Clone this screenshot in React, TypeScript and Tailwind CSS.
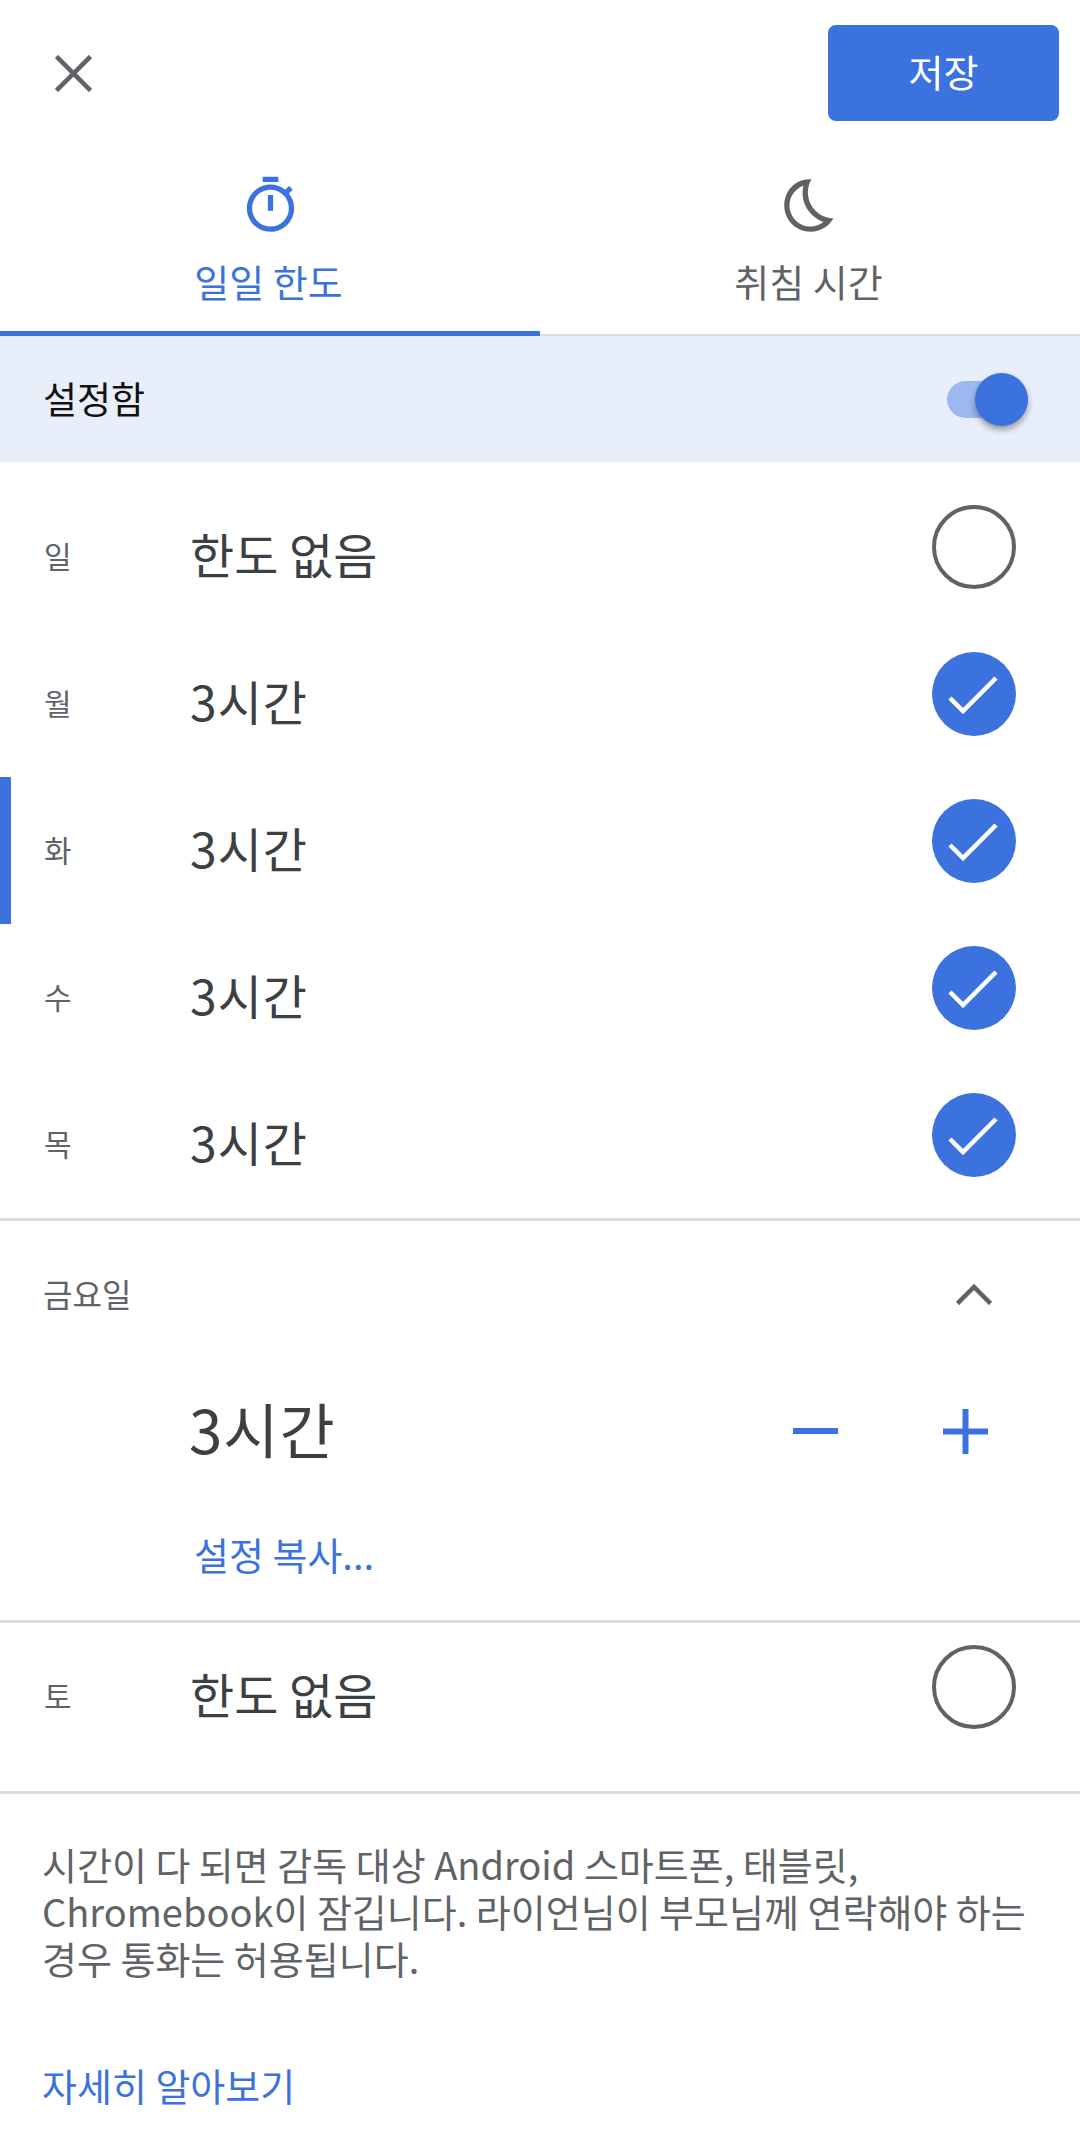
import React from "react";

const font = { fontFamily: '"Noto Sans CJK KR", "Noto Sans", sans-serif' };

const TimerIcon = () => (
  <svg viewBox="0 0 24 24" className="h-[63px] w-[63px] fill-[#3b72de]">
    <path d="M15 1H9v2h6V1zm-4 13h2V8h-2v6zm8.03-6.61l1.42-1.42c-.43-.51-.9-.99-1.41-1.41l-1.42 1.42C16.07 4.74 14.12 4 12 4c-4.97 0-9 4.03-9 9s4.02 9 9 9 9-4.03 9-9c0-2.12-.74-4.07-1.97-5.61zM12 20c-3.87 0-7-3.13-7-7s3.13-7 7-7 7 3.13 7 7-3.13 7-7 7z" />
  </svg>
);

const MoonIcon = () => (
  <svg viewBox="0 0 24 24" className="h-[63px] w-[63px] fill-[#5f6368]">
    <path d="M9.27,4.49c-1.63,7.54,3.75,12.41,7.66,13.8C15.54,19.38,13.81,20,12.04,20C7.6,20,4,16.4,4,11.96C4,8.58,6.08,5.68,9.27,4.49 M11.99,2.01C6.4,1.74,2,6.32,2,11.96c0,5.52,4.48,10,10.04,10c3.71,0,6.93-2.02,8.66-5.02C13.15,16.73,8.57,8.55,12.37,2.01C12.25,2.01,12.12,2.01,11.99,2.01L11.99,2.01z" />
  </svg>
);

const DayRow = ({ day, value, on, current }: { day: string; value: string; on: boolean; current?: boolean }) => (
  <div className="relative flex h-[147px] items-center pl-[44px] pr-[64px]">
    {current && <div className="absolute left-0 top-0 h-full w-[11px] bg-[#3b72de]" />}
    <div className="w-[146px] pb-[3px] text-[30px] text-[#5f6368]">{day}</div>
    <div className={`flex-1 pb-[8px] text-[48px] text-[#3c4043] ${on ? "tracking-[1px]" : ""}`}>{value}</div>
    {on ? (
      <div className="mb-5 flex h-[84px] w-[84px] items-center justify-center rounded-full bg-[#3b72de]">
        <svg viewBox="0 0 84 84" className="h-[84px] w-[84px] fill-none stroke-white stroke-[4.5]">
          <path d="M18 46l13 13 33-33" />
        </svg>
      </div>
    ) : (
      <div className="mb-5 h-[84px] w-[84px] rounded-full border-4 border-[#5f6368]" />
    )}
  </div>
);

export default function App() {
  return (
    <div className="h-[2137px] w-[1080px] overflow-hidden bg-white" style={font}>
      {/* Top bar */}
      <div className="flex h-[174px] items-start justify-between pl-[55px] pr-[21px] pt-[25px]">
        <svg viewBox="0 0 37 37" className="mt-[30px] h-[37px] w-[37px] fill-none stroke-[#5f6368] stroke-[4.5]">
          <path d="M1.5 1.5l34 34M35.5 1.5l-34 34" />
        </svg>
        <button className="flex h-[96px] w-[231px] items-center justify-center rounded-[8px] bg-[#3b72de] pb-[5px] text-[38px] text-white">
          저장
        </button>
      </div>

      {/* Tabs */}
      <div className="flex h-[162px]">
        <div className="flex flex-1 flex-col items-center border-b-[5px] border-[#3b72de]">
          <TimerIcon />
          <div className="mt-[16px] pr-[3px] text-[38px] leading-[56px] text-[#3b72de]">일일 한도</div>
        </div>
        <div className="flex flex-1 flex-col items-center border-b-2 border-[#dadce0]">
          <MoonIcon />
          <div className="mt-[16px] pr-[3px] text-[38px] leading-[56px] text-[#5f6368]">취침 시간</div>
        </div>
      </div>

      {/* Switch banner */}
      <div className="flex h-[126px] items-center justify-between bg-[#e8effb] pl-[43px] pr-[52px]">
        <div className="text-[37px] text-[#111111]">설정함</div>
        <div className="relative h-[37px] w-[81px] rounded-full bg-[#9bb9f0]">
          <div className="absolute -top-[8px] right-0 h-[53px] w-[53px] rounded-full bg-[#3b72de] shadow-[0_4px_6px_rgba(0,0,0,0.35)]" />
        </div>
      </div>

      {/* Day rows */}
      <div className="border-b-[3px] border-[#dadce0] pt-[21px]">
        <DayRow day="일" value="한도 없음" on={false} />
        <DayRow day="월" value="3시간" on />
        <DayRow day="화" value="3시간" on current />
        <DayRow day="수" value="3시간" on />
        <DayRow day="목" value="3시간" on />
      </div>

      {/* Friday, expanded */}
      <div className="h-[402px] border-b-[3px] border-[#dadce0] pl-[43px] pr-[92px]">
        <div className="flex h-[150px] items-center justify-between">
          <div className="pb-[6px] text-[32px] text-[#5f6368]">금요일</div>
          <svg viewBox="0 0 36 21" className="mr-[-4px] mb-[3px] h-[21px] w-[36px] fill-none stroke-[#5f6368] stroke-[4.5]">
            <path d="M1.5 19.5L18 3l16.5 16.5" />
          </svg>
        </div>
        <div className="flex h-[120px] items-center justify-between pl-[146px]">
          <div className="pb-[6px] text-[60px] tracking-[1px] text-[#3c4043]">3시간</div>
          <div className="flex items-center gap-[105px]">
            <div className="h-[6px] w-[45px] bg-[#3b72de]" />
            <svg viewBox="0 0 45 45" className="h-[45px] w-[45px] fill-[#3b72de]">
              <path d="M19.5 0h6v19.5H45v6H25.5V45h-6V25.5H0v-6h19.5z" />
            </svg>
          </div>
        </div>
        <div className="mt-[34px] pl-[151px] text-[38px] text-[#3b72de]">설정 복사...</div>
      </div>

      {/* Saturday */}
      <div className="border-b-[3px] border-[#dadce0] pb-[21px]">
        <DayRow day="토" value="한도 없음" on={false} />
      </div>

      {/* Footer */}
      <div className="px-[42px] pt-[46px]">
        <p className="whitespace-nowrap text-[38px] leading-[47px] text-[#5f6368]">
          시간이 다 되면 감독 대상 Android 스마트폰, 태블릿,
          <br />
          Chromebook이 잠깁니다. 라이언님이 부모님께 연락해야 하는
          <br />
          경우 통화는 허용됩니다.
        </p>
        <div className="mt-[75px] text-[38px] text-[#3b72de]">자세히 알아보기</div>
      </div>
    </div>
  );
}
